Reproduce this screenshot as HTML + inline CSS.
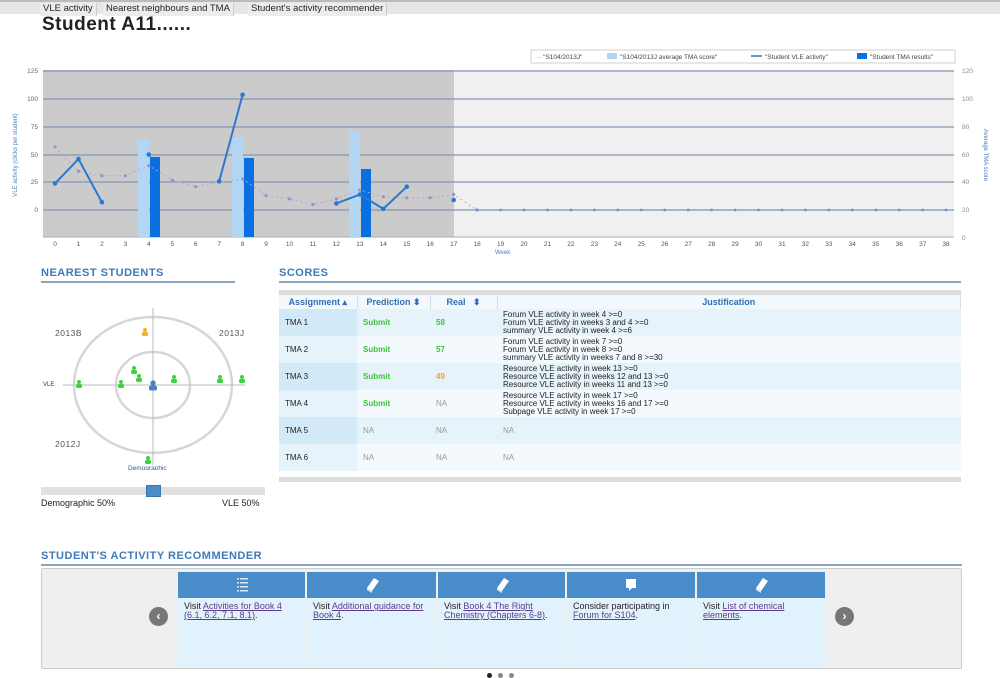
<!DOCTYPE html>
<html><head><meta charset="utf-8"><style>
*{box-sizing:border-box;margin:0;padding:0}
body{width:1000px;height:678px;background:#fff;font-family:"Liberation Sans",sans-serif;position:relative;overflow:hidden;color:#222}
.abs{position:absolute}
.tabs{top:0;left:0;width:1000px;height:14px;background:#e6e6e6;border-top:2px solid #bbb}
.tab{position:absolute;top:1px;height:13px;font-size:9.5px;padding:0 3px;line-height:12px;background:#ececec;border-right:1px solid #ccc;color:#222}
h1{position:absolute;left:42px;top:14px;font-size:19px;font-weight:bold;letter-spacing:0.5px}
.sect{position:absolute;font-size:11px;font-weight:bold;color:#3d7ab8;letter-spacing:0.5px;border-bottom:2px solid #8aa5bd;padding-bottom:2px}
table{border-collapse:collapse;font-size:8px}
.tbl{left:279px;top:290px;width:682px}
.tbl th{background:#f3f8fc;color:#2f6fb5;font-size:9px;height:14px;border-right:1px solid #ddd;font-weight:bold}
.tbl td{height:27px;padding-left:6px;vertical-align:middle;line-height:8px}
.g{color:#3ec43e;font-weight:bold}.na{color:#999}
.card{position:absolute;top:572px;height:96px;background:#e2f2fc}
.card .hd{height:26px;background:#4a8cca;color:#fff;text-align:center}
.card .tx{font-size:9px;padding:4px 6px;line-height:9px;color:#222;font-family:"Liberation Sans Narrow","Liberation Sans",sans-serif}
.card a{color:#5b3b8c;text-decoration:underline}
.arr{position:absolute;width:19px;height:19px;border-radius:50%;background:#777;color:#fff;font-size:12px;text-align:center;line-height:18px;font-weight:bold}
</style></head><body>
<div class="abs tabs">
<div class="tab" style="left:40px">VLE activity</div>
<div class="tab" style="left:103px">Nearest neighbours and TMA</div>
<div class="tab" style="left:248px">Student's activity recommender</div>
</div>
<h1>Student A11......</h1>

<svg class="abs" style="left:0;top:45px" width="1000" height="215" viewBox="0 45 1000 215">
<defs>
<marker id="pd" markerWidth="4" markerHeight="4" refX="2" refY="2" markerUnits="userSpaceOnUse"><circle cx="2" cy="2" r="1.6" fill="#a08ed0"/></marker>
<marker id="bd" markerWidth="6" markerHeight="6" refX="3" refY="3" markerUnits="userSpaceOnUse"><circle cx="3" cy="3" r="2.3" fill="#2a79d0"/></marker>
<marker id="sd" markerWidth="4" markerHeight="4" refX="2" refY="2" markerUnits="userSpaceOnUse"><circle cx="2" cy="2" r="1.4" fill="#6a95cc"/></marker>
</defs>
<rect x="531" y="50" width="424" height="13" fill="#fff" stroke="#bbb" stroke-width="0.7"/>
<g font-size="6.5" fill="#444">
<text x="537" y="59">·· "S104/2013J"</text>
<rect x="607" y="53" width="10" height="6" fill="#b3d6f5"/><text x="620" y="59">"S104/2013J average TMA score"</text>
<line x1="751" y1="56" x2="762" y2="56" stroke="#2a79d0" stroke-width="1.5"/><text x="765" y="59">"Student VLE activity"</text>
<rect x="857" y="53" width="10" height="6" fill="#0a6fe0"/><text x="870" y="59">"Student TMA results"</text>
</g>
<rect x="43" y="70" width="911" height="167" fill="#f0f0f0"/>
<rect x="43" y="70" width="411" height="167" fill="#cbcbcb"/>
<g stroke="#7f97ae" stroke-width="1.3">
<line x1="43" y1="71" x2="954" y2="71"/><line x1="43" y1="99" x2="954" y2="99"/><line x1="43" y1="127" x2="954" y2="127"/><line x1="43" y1="155" x2="954" y2="155"/><line x1="43" y1="182" x2="954" y2="182"/><line x1="43" y1="210" x2="954" y2="210"/>
</g>
<line x1="43" y1="237" x2="954" y2="237" stroke="#aab" stroke-width="1"/>
<g font-size="6.5" fill="#666" text-anchor="end">
<text x="38" y="73">125</text><text x="38" y="101">100</text><text x="38" y="129">75</text><text x="38" y="157">50</text><text x="38" y="184">25</text><text x="38" y="212">0</text>
</g>
<g font-size="6.5" fill="#889" >
<text x="962" y="73">120</text><text x="962" y="101">100</text><text x="962" y="129">80</text><text x="962" y="157">60</text><text x="962" y="184">40</text><text x="962" y="212">20</text><text x="962" y="240">0</text>
</g>
<text transform="translate(17,155) rotate(-90)" font-size="6" fill="#4a7fc0" text-anchor="middle">VLE activity (clicks per student)</text>
<text transform="translate(984,155) rotate(90)" font-size="6" fill="#4a7fc0" text-anchor="middle">Average TMA score</text>
<text x="495" y="254" font-size="6" fill="#4a7fc0">Week</text>
<g font-size="6.5" fill="#555" text-anchor="middle">
<text x="55" y="246">0</text><text x="78.5" y="246">1</text><text x="101.9" y="246">2</text><text x="125.4" y="246">3</text><text x="148.8" y="246">4</text><text x="172.3" y="246">5</text><text x="195.7" y="246">6</text><text x="219.2" y="246">7</text><text x="242.6" y="246">8</text><text x="266.1" y="246">9</text><text x="289.5" y="246">10</text><text x="313" y="246">11</text><text x="336.4" y="246">12</text><text x="359.9" y="246">13</text><text x="383.3" y="246">14</text><text x="406.8" y="246">15</text><text x="430.2" y="246">16</text><text x="453.7" y="246">17</text><text x="477.1" y="246">18</text><text x="500.6" y="246">19</text><text x="524" y="246">20</text><text x="547.5" y="246">21</text><text x="570.9" y="246">22</text><text x="594.4" y="246">23</text><text x="617.8" y="246">24</text><text x="641.3" y="246">25</text><text x="664.7" y="246">26</text><text x="688.2" y="246">27</text><text x="711.6" y="246">28</text><text x="735.1" y="246">29</text><text x="758.5" y="246">30</text><text x="782" y="246">31</text><text x="805.4" y="246">32</text><text x="828.9" y="246">33</text><text x="852.3" y="246">34</text><text x="875.8" y="246">35</text><text x="899.2" y="246">36</text><text x="922.7" y="246">37</text><text x="946" y="246">38</text>
</g>
<rect x="138" y="140" width="11" height="97" fill="#b3d6f5"/><rect x="150" y="157" width="10" height="80" fill="#0a6fe0"/>
<rect x="232" y="138" width="11" height="99" fill="#b3d6f5"/><rect x="244" y="158" width="10" height="79" fill="#0a6fe0"/>
<rect x="349" y="132" width="11" height="105" fill="#b3d6f5"/><rect x="361" y="169" width="10" height="68" fill="#0a6fe0"/>
<polyline fill="none" stroke="#b2a6dc" stroke-width="1" stroke-dasharray="2,3" marker-start="url(#pd)" marker-mid="url(#pd)" marker-end="url(#pd)" points="55,146.8 78.5,171.2 101.9,175.7 125.4,175.7 148.8,165.7 172.3,180.1 195.7,186.7 219.2,182.3 242.6,179 266.1,195.6 289.5,198.9 313,204.5 336.4,198.9 359.9,190 383.3,196.7 406.8,197.8 430.2,197.8 453.7,194.5 477.1,210"/>
<polyline fill="none" stroke="#6a95cc" stroke-width="0.8" marker-start="url(#sd)" marker-mid="url(#sd)" marker-end="url(#sd)" points="477.1,210 500.6,210 524,210 547.5,210 570.9,210 594.4,210 617.8,210 641.3,210 664.7,210 688.2,210 711.6,210 735.1,210 758.5,210 782,210 805.4,210 828.9,210 852.3,210 875.8,210 899.2,210 922.7,210 946,210"/>
<g fill="none" stroke="#2a79d0" stroke-width="2">
<polyline marker-start="url(#bd)" marker-mid="url(#bd)" marker-end="url(#bd)" points="55,183.4 78.5,159 101.9,202.2"/>
<polyline marker-start="url(#bd)" marker-end="url(#bd)" points="219.2,181.2 242.6,94.8"/>
<polyline marker-start="url(#bd)" marker-mid="url(#bd)" marker-end="url(#bd)" points="336.4,203.4 359.9,194.5 383.3,208.9 406.8,186.7"/>
</g>
<circle cx="148.8" cy="154.6" r="2.3" fill="#2a79d0"/><circle cx="453.7" cy="200" r="2.3" fill="#2a79d0"/>
</svg>

<div class="sect" style="left:41px;top:267px;width:194px">NEAREST STUDENTS</div>
<div class="sect" style="left:279px;top:267px;width:682px">SCORES</div>

<svg class="abs" style="left:30px;top:290px" width="250" height="180" viewBox="30 290 250 180">
<ellipse cx="153" cy="385" rx="79" ry="68" fill="none" stroke="#d6d6d6" stroke-width="2.5"/>
<ellipse cx="153" cy="385" rx="37" ry="33" fill="none" stroke="#d6d6d6" stroke-width="2.5"/>
<line x1="153" y1="308" x2="153" y2="465" stroke="#bbb"/><line x1="63" y1="385" x2="245" y2="385" stroke="#bbb"/>
<g font-size="8.5" fill="#556" letter-spacing="0.5"><text x="55" y="336">2013B</text><text x="219" y="336">2013J</text><text x="55" y="447">2012J</text></g>
<text x="43" y="386" font-size="6" fill="#334">VLE</text>
<text x="128" y="470" font-size="6.5" fill="#3a5a9a">Demographic</text>
<g fill="#3ed13e">
<g transform="translate(79,386)"><circle cx="0" cy="-4" r="2"/><rect x="-3" y="-2" width="6" height="4" rx="1.5"/></g>
<g transform="translate(121,386)"><circle cx="0" cy="-4" r="2"/><rect x="-3" y="-2" width="6" height="4" rx="1.5"/></g>
<g transform="translate(134,372)"><circle cx="0" cy="-4" r="2"/><rect x="-3" y="-2" width="6" height="4" rx="1.5"/></g>
<g transform="translate(139,380)"><circle cx="0" cy="-4" r="2"/><rect x="-3" y="-2" width="6" height="4" rx="1.5"/></g>
<g transform="translate(174,381)"><circle cx="0" cy="-4" r="2"/><rect x="-3" y="-2" width="6" height="4" rx="1.5"/></g>
<g transform="translate(220,381)"><circle cx="0" cy="-4" r="2"/><rect x="-3" y="-2" width="6" height="4" rx="1.5"/></g>
<g transform="translate(242,381)"><circle cx="0" cy="-4" r="2"/><rect x="-3" y="-2" width="6" height="4" rx="1.5"/></g>
<g transform="translate(148,462)"><circle cx="0" cy="-4" r="2"/><rect x="-3" y="-2" width="6" height="4" rx="1.5"/></g>
</g>
<g fill="#f0b030" transform="translate(145,334)"><circle cx="0" cy="-4" r="2"/><rect x="-3" y="-2" width="6" height="4" rx="1.5"/></g>
<g fill="#4a7fc0" transform="translate(153,388)"><circle cx="0" cy="-5" r="2.6"/><rect x="-4" y="-2.5" width="8" height="5" rx="2"/></g>
</svg>
<div class="abs" style="left:41px;top:487px;width:224px;height:8px;background:#e0e0e0"></div>
<div class="abs" style="left:146px;top:485px;width:15px;height:12px;background:#4a8cca;border:1px solid #3a75b0"></div>
<div class="abs" style="left:41px;top:498px;font-size:9px">Demographic 50%</div>
<div class="abs" style="left:222px;top:498px;font-size:9px">VLE 50%</div>

<div class="abs" style="left:279px;top:290px;width:682px;height:5px;background:#ddd"></div>
<table class="abs tbl" style="top:295px">
<tr><th style="width:78px">Assignment ▴</th><th style="width:73px">Prediction ⬍</th><th style="width:67px">Real &nbsp; ⬍</th><th>Justification</th></tr>
<tr style="background:#e6f3fb"><td style="background:#d2e9f8">TMA 1</td><td class="g">Submit</td><td class="g">58</td><td>Forum VLE activity in week 4 &gt;=0<br>Forum VLE activity in weeks 3 and 4 &gt;=0<br>summary VLE activity in week 4 &gt;=6</td></tr>
<tr style="background:#f3f9fd"><td style="background:#e6f3fb">TMA 2</td><td class="g">Submit</td><td class="g">57</td><td>Forum VLE activity in week 7 &gt;=0<br>Forum VLE activity in week 8 &gt;=0<br>summary VLE activity in weeks 7 and 8 &gt;=30</td></tr>
<tr style="background:#e6f3fb"><td style="background:#d2e9f8">TMA 3</td><td class="g">Submit</td><td style="color:#f0a030;font-weight:bold">49</td><td>Resource VLE activity in week 13 &gt;=0<br>Resource VLE activity in weeks 12 and 13 &gt;=0<br>Resource VLE activity in weeks 11 and 13 &gt;=0</td></tr>
<tr style="background:#f3f9fd"><td style="background:#e6f3fb">TMA 4</td><td class="g">Submit</td><td class="na">NA</td><td>Resource VLE activity in week 17 &gt;=0<br>Resource VLE activity in weeks 16 and 17 &gt;=0<br>Subpage VLE activity in week 17 &gt;=0</td></tr>
<tr style="background:#e6f3fb"><td style="background:#d2e9f8">TMA 5</td><td class="na">NA</td><td class="na">NA</td><td class="na">NA</td></tr>
<tr style="background:#f3f9fd"><td style="background:#e6f3fb">TMA 6</td><td class="na">NA</td><td class="na">NA</td><td class="na">NA</td></tr>
</table>
<div class="abs" style="left:279px;top:477px;width:682px;height:5px;background:#ddd"></div>

<div class="sect" style="left:41px;top:550px;width:921px">STUDENT'S ACTIVITY RECOMMENDER</div>
<div class="abs" style="left:41px;top:568px;width:921px;height:101px;background:#efefef;border:1px solid #ccc;border-radius:2px"></div>
<div class="card" style="left:178px;width:127px"><div class="hd"><svg width="20" height="26"><g fill="#d8e8f8"><rect x="5" y="6" width="2" height="1.5"/><rect x="8" y="6" width="8" height="1.5"/><rect x="5" y="10" width="2" height="1.5"/><rect x="8" y="10" width="8" height="1.5"/><rect x="5" y="14" width="2" height="1.5"/><rect x="8" y="14" width="8" height="1.5"/><rect x="5" y="18" width="2" height="1.5"/><rect x="8" y="18" width="8" height="1.5"/></g></svg></div><div class="tx">Visit <a>Activities for Book 4 (6.1, 6.2, 7.1, 8.1)</a>.</div></div>
<div class="card" style="left:307px;width:129px"><div class="hd"><svg width="20" height="26"><path d="M5 16 L12 6 L17 9 L10 19 Z" fill="#fff"/><path d="M5 16 L10 19 L10 21 L5 18 Z" fill="#dbe9f7"/></svg></div><div class="tx">Visit <a>Additional guidance for Book 4</a>.</div></div>
<div class="card" style="left:438px;width:127px"><div class="hd"><svg width="20" height="26"><path d="M5 16 L12 6 L17 9 L10 19 Z" fill="#fff"/><path d="M5 16 L10 19 L10 21 L5 18 Z" fill="#dbe9f7"/></svg></div><div class="tx">Visit <a>Book 4 The Right Chemistry (Chapters 6-8)</a>.</div></div>
<div class="card" style="left:567px;width:128px"><div class="hd"><svg width="20" height="26"><path d="M5 7 H15 V16 H11 L8 19 V16 H5 Z" fill="#fff"/></svg></div><div class="tx">Consider participating in <a>Forum for S104</a>.</div></div>
<div class="card" style="left:697px;width:128px"><div class="hd"><svg width="20" height="26"><path d="M5 16 L12 6 L17 9 L10 19 Z" fill="#fff"/><path d="M5 16 L10 19 L10 21 L5 18 Z" fill="#dbe9f7"/></svg></div><div class="tx">Visit <a>List of chemical elements</a>.</div></div>
<div class="arr" style="left:149px;top:607px">‹</div>
<div class="arr" style="left:835px;top:607px">›</div>
<div class="abs" style="left:487px;top:673px;width:5px;height:5px;border-radius:50%;background:#222"></div>
<div class="abs" style="left:498px;top:673px;width:5px;height:5px;border-radius:50%;background:#888"></div>
<div class="abs" style="left:509px;top:673px;width:5px;height:5px;border-radius:50%;background:#888"></div>
</body></html>
